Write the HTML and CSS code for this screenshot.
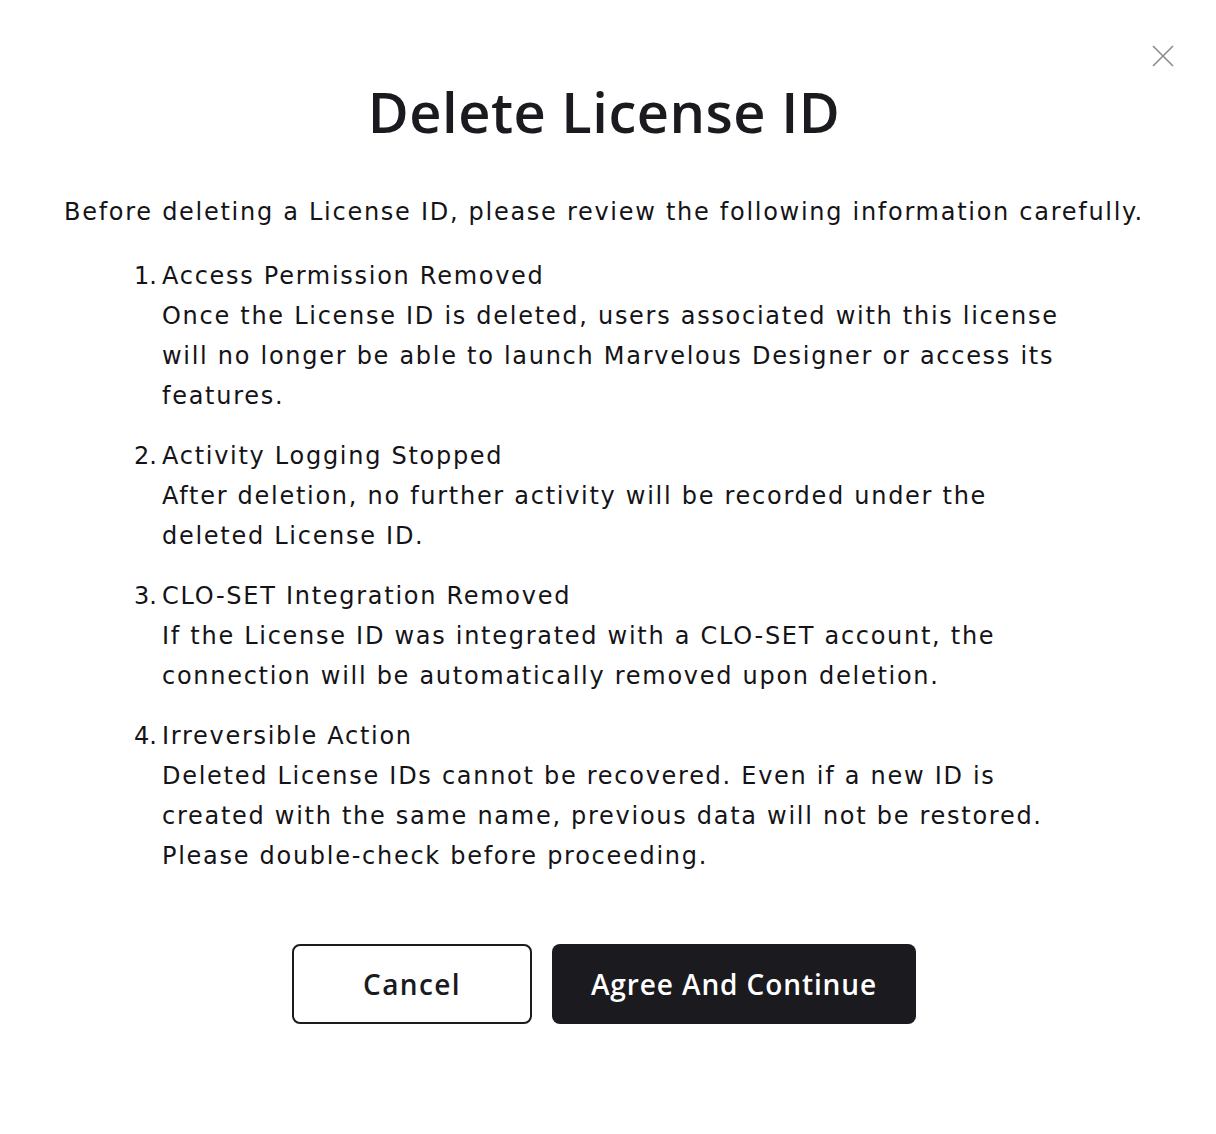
FILE: index.html
```html
<!DOCTYPE html>
<html lang="en">
<head>
<meta charset="utf-8">
<title>Delete License ID</title>
<link rel="stylesheet" href="styles.css">
</head>
<body>
<div class="modal">
  <button class="close" aria-label="Close">
    <svg width="22" height="22" viewBox="0 0 22 22"><path d="M1 1L21 21M21 1L1 21" stroke="#8b8b8f" stroke-width="1.6" fill="none"/></svg>
  </button>
  <h1 class="title">Delete License ID</h1>
  <p class="intro">Before deleting a License ID, please review the following information carefully.</p>
  <ol class="list">
    <li class="item"><span class="num">1.</span><div class="text">Access Permission Removed<br>Once the License ID is deleted, users associated with this license<br>will no longer be able to launch Marvelous Designer or access its<br>features.</div></li>
    <li class="item"><span class="num">2.</span><div class="text">Activity Logging Stopped<br>After deletion, no further activity will be recorded under the<br>deleted License ID.</div></li>
    <li class="item"><span class="num">3.</span><div class="text">CLO-SET Integration Removed<br>If the License ID was integrated with a CLO-SET account, the<br>connection will be automatically removed upon deletion.</div></li>
    <li class="item"><span class="num">4.</span><div class="text">Irreversible Action<br>Deleted License IDs cannot be recovered. Even if a new ID is<br>created with the same name, previous data will not be restored.<br>Please double-check before proceeding.</div></li>
  </ol>
  <div class="actions">
    <button class="btn btn-outline">Cancel</button>
    <button class="btn btn-dark">Agree And Continue</button>
  </div>
</div>
</body>
</html>
```
FILE: styles.css
```css
* { box-sizing: border-box; }
html, body { margin: 0; padding: 0; background: #fff; }
body {
  font-family: "DejaVu Sans", "Open Sans", sans-serif;
  color: #141317;
  width: 1216px;
  height: 1134px;
}
.modal {
  position: relative;
  padding: 72px 72px 0 64px;
}
.close {
  position: absolute;
  top: 45px;
  right: 42px;
  width: 22px;
  height: 22px;
  padding: 0;
  border: 0;
  background: none;
  display: flex;
}
.title {
  margin: 0;
  text-align: center;
  font-family: "Open Sans", sans-serif;
  font-size: 56px;
  font-weight: 600;
  line-height: 78px;
  letter-spacing: 0.5px;
  color: #1b1a1f;
}
.intro {
  margin: 42px 0 0;
  font-size: 24px;
  line-height: 40px;
  text-align: center;
  letter-spacing: 1.72px;
  white-space: nowrap;
}
.list {
  list-style: none;
  margin: 24px 0 0;
  padding: 0 0 0 56px;
  display: flex;
  flex-direction: column;
  gap: 20px;
}
.item {
  display: flex;
  font-size: 24px;
  line-height: 40px;
  letter-spacing: 1.72px;
  white-space: nowrap;
}
.num {
  width: 42px;
  text-align: right;
  padding-right: 5px;
  letter-spacing: 0;
  flex: none;
}
.actions {
  margin-top: 68px;
  display: flex;
  justify-content: center;
  gap: 20px;
}
.btn {
  height: 80px;
  border-radius: 8px;
  font-family: "Open Sans", sans-serif;
  font-size: 28px;
  font-weight: 600;
  letter-spacing: 0.9px;
  cursor: pointer;
}
.btn-outline {
  width: 240px;
  background: #fff;
  color: #1b1a1f;
  border: 2px solid #1b1a1f;
  letter-spacing: 1.4px;
}
.btn-dark {
  width: 364px;
  background: #1b1a1f;
  color: #fff;
  border: 0;
}
```
